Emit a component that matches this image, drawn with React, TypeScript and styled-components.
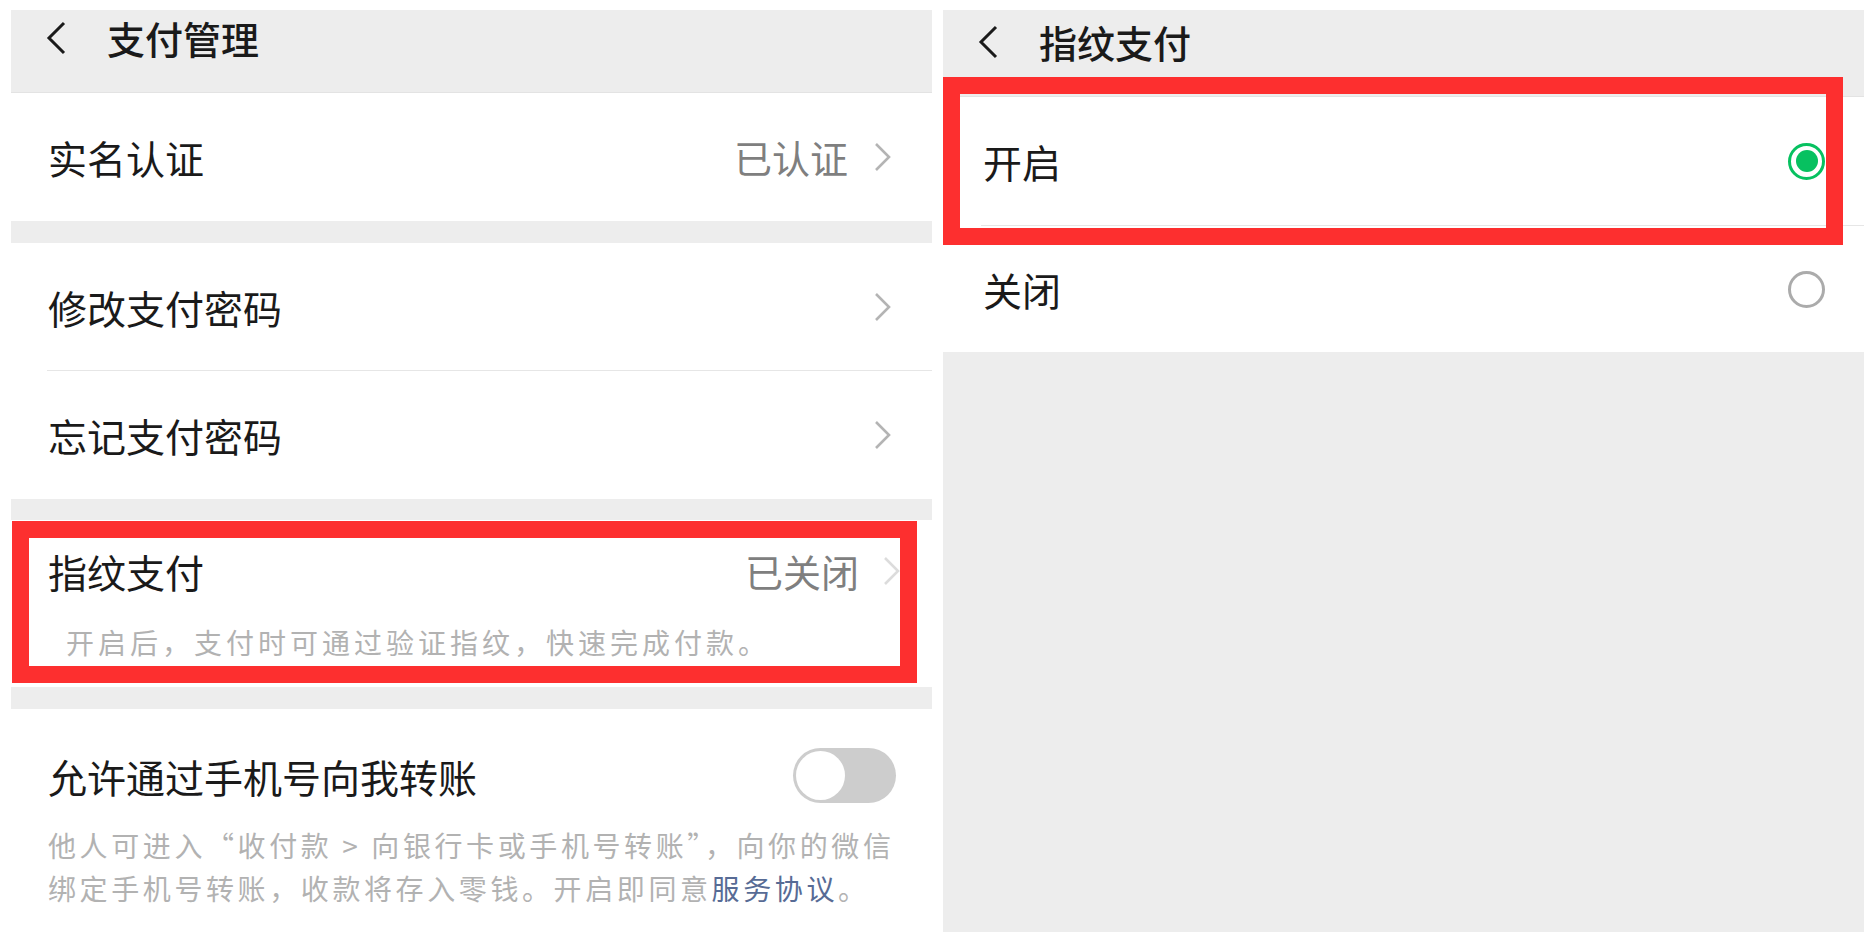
import React from 'react';
import styled, { createGlobalStyle } from 'styled-components';

const GlobalStyle = createGlobalStyle`
    body {
        margin: 0;
        background-color: #fff;
        font-family: 'Noto Sans CJK SC', 'Noto Sans', sans-serif;
        color: #1a1a1a;
    }
`;

const Page = styled.div`
    display: flex;
    gap: 11px;
    padding: 10px 0 0 11px;
`;

const Panel = styled.section`
    position: relative;
    display: flex;
    flex-direction: column;
    width: 921px;
    height: 922px;
    background-color: #ededed;
`;

const Header = styled.header<{ $h: number; $top: number }>`
    display: flex;
    align-items: flex-start;
    box-sizing: border-box;
    height: ${({ $h }) => `${$h}px`};
    padding: ${({ $top }) => `${$top}px`} 0 0 34px;
    border-bottom: 1px solid #e3e3e3;
`;

const HeaderInner = styled.div`
    display: flex;
    align-items: center;
    gap: 40px;
    height: 40px;
`;

const Title = styled.h1`
    margin: 0;
    font-size: 38px;
    font-weight: 500;
    line-height: 40px;
    color: #1a1a1a;
`;

const Group = styled.div<{ $gap?: number; $grow?: boolean }>`
    display: flex;
    flex-direction: column;
    margin-top: ${({ $gap }) => `${$gap || 0}px`};
    background-color: #fff;
    ${({ $grow }) => ($grow ? 'flex: 1;' : '')}
`;

const Row = styled.div<{ $h: number; $pl?: number; $pr?: number }>`
    display: flex;
    align-items: center;
    height: ${({ $h }) => `${$h}px`};
    padding: 0 ${({ $pr }) => `${$pr ?? 40}px`} 0 ${({ $pl }) => `${$pl ?? 37}px`};
    font-size: 39px;
    line-height: 48px;
`;

const Trail = styled.div<{ $gap: number }>`
    display: flex;
    align-items: center;
    gap: ${({ $gap }) => `${$gap}px`};
    margin-left: auto;
`;

const Divider = styled.div<{ $inset: number }>`
    height: 1px;
    margin-left: ${({ $inset }) => `${$inset}px`};
    background-color: #e6e6e6;
`;

const Value = styled.span`
    font-size: 38px;
    color: #7f7f7f;
`;

const Arrow = styled.svg<{ $faded?: boolean }>`
    flex: none;
    stroke: ${({ $faded }) => ($faded ? '#dcdcdc' : '#b4b4b4')};
`;

const Note = styled.p<{ $pl: number }>`
    margin: 0;
    padding-left: ${({ $pl }) => `${$pl}px`};
    font-size: 28px;
    line-height: 40px;
    letter-spacing: 4px;
    color: #b2b2b2;
    white-space: nowrap;
`;

const SwitchHead = styled.div`
    display: flex;
    align-items: center;
    padding: 39px 36px 0 37px;
    font-size: 39px;
    line-height: 52px;
`;

const SwitchTrack = styled.span`
    display: flex;
    align-items: center;
    box-sizing: border-box;
    margin-left: auto;
    width: 103px;
    height: 55px;
    padding: 3px;
    border-radius: 28px;
    background-color: #cdcdcd;
`;

const SwitchKnob = styled.span`
    width: 49px;
    height: 49px;
    border-radius: 50%;
    background-color: #fff;
`;

const Help = styled.p`
    margin: 21px 0 0;
    padding: 0 20px 0 37px;
    font-size: 28px;
    line-height: 43px;
    letter-spacing: 3.6px;
    color: #b2b2b2;
    white-space: nowrap;
`;

const Link = styled.span`
    color: #576b95;
`;

const Radio = styled.span<{ $on: boolean }>`
    position: relative;
    flex: none;
    box-sizing: border-box;
    margin-left: auto;
    width: 37px;
    height: 37px;
    border-radius: 50%;
    border: 3px solid ${({ $on }) => ($on ? '#07c160' : '#ababab')};

    &::after {
        content: '';
        display: ${({ $on }) => ($on ? 'block' : 'none')};
        position: absolute;
        top: 4.5px;
        left: 4.5px;
        width: 22px;
        height: 22px;
        border-radius: 50%;
        background-color: #07c160;
    }
`;

const Highlight = styled.div<{ $l: number; $t: number; $w: number; $h: number }>`
    position: absolute;
    left: ${({ $l }) => `${$l}px`};
    top: ${({ $t }) => `${$t}px`};
    width: ${({ $w }) => `${$w}px`};
    height: ${({ $h }) => `${$h}px`};
    box-sizing: border-box;
    border: 17px solid #fd2f2f;
    pointer-events: none;
`;

function Back() {
    return (
        <svg width="22" height="34" viewBox="0 0 22 34" fill="none">
            <polyline points="19,2 4,17 19,32" stroke="#1a1a1a" strokeWidth="3" strokeLinejoin="miter" />
        </svg>
    );
}

function Chevron({ faded }: { faded?: boolean }) {
    return (
        <Arrow $faded={faded} width="18" height="30" viewBox="0 0 18 30" fill="none" strokeWidth="2.6">
            <polyline points="2,2 15,15 2,28" />
        </Arrow>
    );
}

function PayManage() {
    return (
        <Panel>
            <Header $h={83} $top={8}>
                <HeaderInner>
                    <Back />
                    <Title>支付管理</Title>
                </HeaderInner>
            </Header>
            <Group>
                <Row $h={128}>
                    实名认证
                    <Trail $gap={26}>
                        <Value>已认证</Value>
                        <Chevron />
                    </Trail>
                </Row>
            </Group>
            <Group $gap={22}>
                <Row $h={127}>
                    修改支付密码
                    <Trail $gap={26}>
                        <Chevron />
                    </Trail>
                </Row>
                <Divider $inset={36} />
                <Row $h={128}>
                    忘记支付密码
                    <Trail $gap={26}>
                        <Chevron />
                    </Trail>
                </Row>
            </Group>
            <Group $gap={21}>
                <Row $h={102} $pr={31}>
                    指纹支付
                    <Trail $gap={24}>
                        <Value>已关闭</Value>
                        <Chevron faded />
                    </Trail>
                </Row>
                <Note $pl={55}>开启后，支付时可通过验证指纹，快速完成付款。</Note>
                <div style={{ height: 25 }} />
            </Group>
            <Group $gap={22} $grow>
                <SwitchHead>
                    允许通过手机号向我转账
                    <SwitchTrack>
                        <SwitchKnob />
                    </SwitchTrack>
                </SwitchHead>
                <Help>
                    他人可进入“收付款 &gt; 向银行卡或手机号转账”，向你的微信
                    <br />
                    绑定手机号转账，收款将存入零钱。开启即同意<Link>服务协议</Link>。
                </Help>
            </Group>
            <Highlight $l={1} $t={511} $w={905} $h={162} />
        </Panel>
    );
}

function FingerprintPay() {
    return (
        <Panel>
            <Header $h={87} $top={12}>
                <HeaderInner>
                    <Back />
                    <Title>指纹支付</Title>
                </HeaderInner>
            </Header>
            <Group>
                <Row $h={128} $pl={40} $pr={39}>
                    开启
                    <Radio $on />
                </Row>
                <Divider $inset={38} />
                <Row $h={126} $pl={40} $pr={39}>
                    关闭
                    <Radio $on={false} />
                </Row>
            </Group>
            <Highlight $l={0} $t={67} $w={900} $h={168} />
        </Panel>
    );
}

export default function App() {
    return (
        <>
            <GlobalStyle />
            <Page>
                <PayManage />
                <FingerprintPay />
            </Page>
        </>
    );
}
